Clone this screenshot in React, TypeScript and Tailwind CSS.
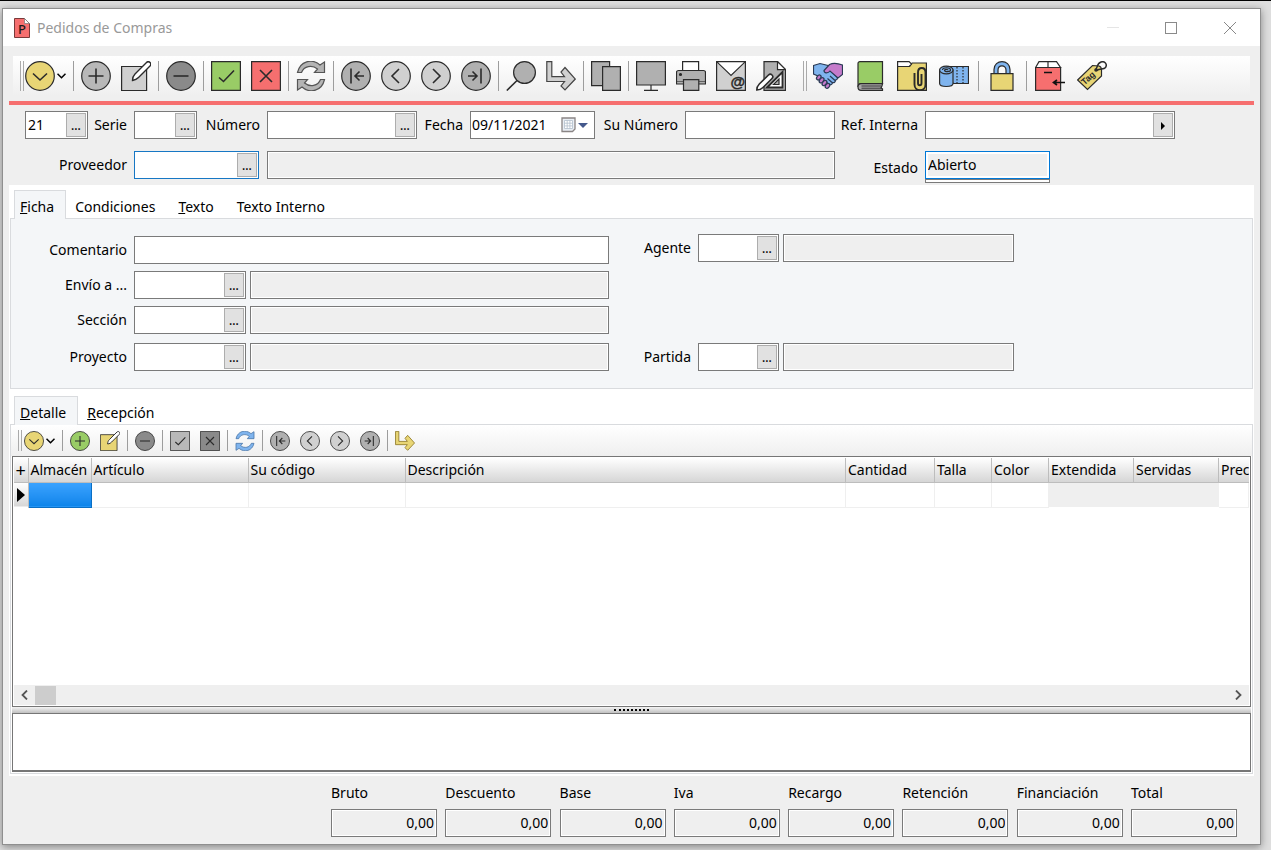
import type { ReactNode } from "react";

const INK = "#2b2b2b";

/* ---------- Icons, all drawn on a 30x30 board ---------- */

const Svg = ({ children }: { children: ReactNode }) => (
  <svg viewBox="0 0 30 30" className="size-full" fill="none" stroke={INK} strokeWidth="1.2" aria-hidden="true">
    {children}
  </svg>
);

const Disc = ({ fill, children }: { fill: string; children: ReactNode }) => (
  <Svg>
    <circle cx="15" cy="15" r="14.3" fill={fill} />
    {children}
  </Svg>
);

const MenuIcon = () => (
  <Disc fill="#e8d575"><path d="M8 12.5 15 19l7-6.5" strokeWidth="1.6" /></Disc>
);
const AddIcon = ({ fill = "#b8b8b8" }) => (
  <Disc fill={fill}><path d="M15 7.5v15M7.5 15h15" strokeWidth="1.6" /></Disc>
);
const RemoveIcon = () => (
  <Disc fill="#8a8a8a"><path d="M7.5 15h15" strokeWidth="1.6" /></Disc>
);
const FirstIcon = () => (
  <Disc fill="#b0b0b0"><path d="M10 7.5v15M23 15h-9M18.500 10.500 14 15l4.500 4.500" strokeWidth="1.6" /></Disc>
);
const PrevIcon = () => (
  <Disc fill="#d0d0d0"><path d="M18 8l-7 7 7 7" strokeWidth="1.6" /></Disc>
);
const NextIcon = () => (
  <Disc fill="#d0d0d0"><path d="M12 8l7 7-7 7" strokeWidth="1.6" /></Disc>
);
const LastIcon = () => (
  <Disc fill="#b0b0b0"><path d="M20 7.5v15M7 15h9M11.500 10.500 16 15l-4.500 4.500" strokeWidth="1.6" /></Disc>
);
const EditIcon = ({ fill = "#d0d0d0" }) => (
  <Svg>
    <path d="M.6 5.500h25v24H.6z" fill={fill} />
    <path d="M11.500 19.500c0-3 1-5 2.500-6.500L25.500 1.500c1-1 2.500-1 3.500 0s1 2.500 0 3.500L17.500 16.500c-1.500 1.500-3 2.500-6 3z" fill="#fff" strokeWidth="1.4" />
  </Svg>
);
const AcceptIcon = ({ fill = "#99cc66" }) => (
  <Svg>
    <path d="M.6.6h28.800v28.800H.6z" fill={fill} />
    <path d="M8 16.500l4.500 4L23 9.500" strokeWidth="1.6" />
  </Svg>
);
const CancelIcon = ({ fill = "#f66f6f" }) => (
  <Svg>
    <path d="M.6.6h28.800v28.800H.6z" fill={fill} />
    <path d="M9 9l12 12M21 9 9 21" strokeWidth="1.6" />
  </Svg>
);
const RefreshIcon = ({ fill = "#b4b4b4", stroke = "#555" }) => (
  <Svg>
    <g fill={fill} stroke={stroke}>
      <path d="M1.500 11.500C4 0 16-3 24 4l4.500-3v10.500h-10L21.500 8C16 3.500 8 5 5.500 11.500z" />
      <path d="M28.500 18.500C26 30 14 33 6 26l-4.500 3V18.500h10L8.500 22c5.500 4.500 13.500 3 16-3.500z" />
    </g>
  </Svg>
);
const SearchIcon = () => (
  <Svg>
    <circle cx="18.500" cy="11.500" r="10.900" fill="#b0b0b0" />
    <path d="M11 19.500.8 29.500" strokeWidth="1.6" />
  </Svg>
);
const ForwardIcon = ({ fill = "#d0d0d0", stroke = "#444" }) => (
  <Svg>
    <path d="M.8.600h5v15h12.700L15 11l4-4.500L29.300 18 19 29l-4-4 3.500-4.500H.8z" fill={fill} stroke={stroke} />
  </Svg>
);
const CopyIcon = () => (
  <Svg>
    <g fill="#b0b0b0">
      <path d="M.6.6h18v24H.6z" />
      <path d="M11.600 5.600h17.800v23.800H11.600z" />
    </g>
  </Svg>
);
const ScreenIcon = () => (
  <Svg>
    <path d="M.6.6h28.800v23.400H.6z" fill="#b0b0b0" />
    <path d="M15 24v5M8 29.300h14" />
  </Svg>
);
const PrintIcon = () => (
  <Svg>
    <path d="M6.600.6h16v10h-16z" fill="#fff" />
    <path d="M2.500 9.500h25c1 0 2 .8 2 2V23H.5V11.500c0-1.200 1-2 2-2z" fill="#b0b0b0" />
    <path d="M.5 20.500h29" strokeWidth=".6" />
    <path d="M7.500 18.600h15.300v10.800H7.500z" fill="#b0b0b0" />
    <circle cx="4.500" cy="13.500" r="1" fill={INK} />
  </Svg>
);
const MailIcon = () => (
  <Svg>
    <path d="M.6.6h28.800v28.800H.6z" fill="#d0d0d0" />
    <path d="M.6.6h28.800L15 14.500z" fill="#fff" />
    <text x="14.500" y="26" fontSize="15" fontWeight="700" fontFamily="Liberation Sans, sans-serif" fill={INK} stroke={INK} strokeWidth=".4">@</text>
  </Svg>
);
const DesignIcon = () => (
  <Svg>
    <path d="M8 .6h13.500l8 8v20.800H8z" fill="#b0b0b0" />
    <path d="M21.500.6v8h8z" fill="#fff" />
    <path d="M11 26.500 26.500 11v15.500z" fill="#fff" strokeWidth="1.8" />
    <path d="M17.500 23.500l5.500-5.500v5.500z" fill="#b0b0b0" />
    <path d="M.8 29c0-3 1-4.500 2.500-6L12.500 14c1-1 2.500-1 3.500 0s1 2.500 0 3.500l-9 9c-1.500 1.500-3.500 2.500-6.200 2.500z" fill="#fff" strokeWidth="1.6" />
  </Svg>
);
const DealIcon = () => (
  <Svg>
    <g stroke="#2a3a55">
      <path d="M.5 4.500 7 2.500l8 2L17 9l7 7c1 1.500 0 3-1.500 3 .2 2-1.500 3-3 2.500 0 2-2 2.800-3.500 1.800L5 15l-4.500-2z" fill="#7fb4ee" />
      <path d="M29.500 4v9.500L25 17l-8-7c-2 2.500-6 2.500-6-.5L16.500 3.500c4-2 9-1 13 .5z" fill="#c57bcb" />
      <path d="M17 15l5 4.500M14.500 17.500l4.500 4" />
      <g fill="#c57bcb">
        <ellipse cx="5.800" cy="16.500" rx="2.700" ry="1.900" transform="rotate(-50 5.800 16.500)" />
        <ellipse cx="8.600" cy="19.300" rx="2.900" ry="1.900" transform="rotate(-50 8.600 19.300)" />
        <ellipse cx="11.500" cy="22" rx="2.900" ry="1.900" transform="rotate(-50 11.500 22)" />
        <ellipse cx="14.500" cy="24.800" rx="2.700" ry="1.900" transform="rotate(-50 14.500 24.800)" />
      </g>
    </g>
  </Svg>
);
const BookIcon = () => (
  <Svg>
    <path d="M5 .6h22.500v22H6c-2 0-3 1.500-3 3.500V2.500C3 1.400 3.800.6 5 .6z" fill="#99cc66" />
    <path d="M27.500 22.600H6c-4 0-4 6.800 0 6.800h21.500v-1.500l-1.500-1 1-2z" fill="#a8a8a8" />
    <path d="M6.500 25h20M6.500 27.200h20" strokeWidth=".9" />
  </Svg>
);
const AttachIcon = () => (
  <Svg>
    <path d="M.6 5.500h12l2.500-3.500h14.300v27.400H.6z" fill="#e8d575" />
    <path d="M.6 5.500V.6h11.500L14.500 3l-2.200 2.500z" fill="#fff" />
    <path d="M24.500 13v9c0 3-3.500 3-3.500 0V11.500c0-6 7.500-6 7.500 0v12c0 7.500-11 7.500-11 0V12" strokeWidth="1.9" />
  </Svg>
);
const RollIcon = () => (
  <Svg>
    <path d="M8 5.500h21.500v17H14z" fill="#7fb4ee" />
    <path d="M18 6v16M24 6v16" strokeDasharray="1.500 1.500" />
    <path d="M.6 9v13.500c0 4 13.400 4 13.400 0V9z" fill="#7fb4ee" />
    <ellipse cx="7.300" cy="9" rx="6.700" ry="3.800" fill="#7fb4ee" />
    <path d="M3.500 9c0-3 8-3 8 0 0 2.200-6 2.200-6 .3 0-1.300 3.500-1.300 3.500 0" />
  </Svg>
);
const LockIcon = () => (
  <Svg>
    <path d="M7 13V8.500c0-10.500 16-10.500 16 0V13h-4V9c0-5.500-8-5.500-8 0v4z" fill="#7fb4ee" />
    <path d="M4 12.600h22v16.800H4z" fill="#e8d575" />
  </Svg>
);
const BoxIcon = () => (
  <Svg>
    <path d="M.6 6.500 4 .6h17.500l4 5.900z" fill="#fff" />
    <path d="M13 .6v6" />
    <path d="M.6 6.500h25v22.900H.6z" fill="#f66f6f" />
    <path d="M9 11.500h8M30 21.500H19M22 19l-3.500 2.500L22 24" stroke="#111" strokeWidth="1.700" />
  </Svg>
);
const TagIcon = () => (
  <Svg>
    <path d="M.6 19 15.500 4.500 22 5c1.800.5 2.500 2 2.500 4v6L10.500 28.500z" fill="#e8d575" />
    <path d="M18.500 8.500c2-1 1-6 5.500-7.500 4-1.300 6.500 2.500 4.500 5.500-2 2.500-5 .5-9 3" strokeWidth="1.5" />
    <circle cx="19" cy="9" r="1.800" fill={INK} stroke="none" />
    <text x="7.500" y="24.500" fontSize="9" fontWeight="700" fontFamily="Liberation Sans, sans-serif" fill={INK} stroke="none" transform="rotate(-42 7.500 24.500)">Tag</text>
  </Svg>
);

/* ---------- Toolbar parts ---------- */

const Tool = ({ label, small, wide, children }: { label: string; small?: boolean; wide?: boolean; children: ReactNode }) => (
  <button type="button" aria-label={label} title={label} className={`shrink-0 ${small ? "size-5" : "size-[30px]"} ${wide ? "mx-[6px]" : "mx-[5px]"}`}>
    {children}
  </button>
);

const Sep = ({ wide }: { wide?: boolean }) => (
  <span className={`flex shrink-0 justify-center self-stretch py-[5px] ${wide ? "w-[6px]" : "w-[5px]"}`}>
    <span className="w-px bg-[#9d9d9d]" />
  </span>
);

const Grip = () => (
  <span className="flex shrink-0 gap-[2px] self-stretch py-[5px]">
    <span className="w-px bg-[#aaa]" />
    <span className="w-px bg-[#aaa]" />
  </span>
);

const DropArrow = () => (
  <button type="button" aria-label="Más opciones" className="mr-1 w-[9px] shrink-0">
    <svg viewBox="0 0 9 6" className="w-full" fill="none" stroke="#000" strokeWidth="1.500"><path d="M.5.8l4 4 4-4" /></svg>
  </button>
);

/* ---------- Fields ---------- */

const Label = ({ htmlFor, className = "", children }: { htmlFor: string; className?: string; children: ReactNode }) => (
  <label htmlFor={htmlFor} className={`shrink-0 whitespace-nowrap pr-[7px] text-right ${className}`}>{children}</label>
);

interface LookupProps {
  id: string;
  width: string;
  value?: string;
  focused?: boolean;
  icon?: ReactNode;
}

const Lookup = ({ id, width, value = "", focused, icon }: LookupProps) => (
  <div className={`flex h-7 shrink-0 border bg-white p-px ${focused ? "border-[#1777c4]" : "border-[#7a7a7a]"} ${width}`}>
    <input id={id} defaultValue={value} className="w-full min-w-0 flex-1 pl-px outline-none" />
    <button type="button" aria-label="Buscar" className="flex w-5 shrink-0 items-center justify-center border border-[#adadad] bg-[#e1e1e1] pt-px text-xs font-medium leading-none">
      {icon || "..."}
    </button>
  </div>
);

const ReadOnly = ({ label, className = "" }: { label: string; className?: string }) => (
  <input readOnly aria-label={label} className={`h-7 min-w-0 border border-[#7a7a7a] bg-[#efefef] shadow-[inset_0_0_0_1px_#fff] outline-none ${className}`} />
);

const Tab = ({ active, children }: { active?: boolean; children: ReactNode }) => (
  <button
    type="button"
    role="tab"
    aria-selected={!!active}
    className={active
      ? "relative -mb-px h-[29px] border border-b-0 border-[#d9dbde] bg-[#f4f6f8] pl-[5px] pr-[11px] pt-1"
      : "h-7 pl-[9px] pr-[14px] pt-[6px]"}
  >
    {children}
  </button>
);

const columns = [
  { name: "Almacén", width: "w-[63px]" },
  { name: "Artículo", width: "w-[157px]" },
  { name: "Su código", width: "w-[157px]" },
  { name: "Descripción", width: "" },
  { name: "Cantidad", width: "w-[89px]" },
  { name: "Talla", width: "w-[57px]" },
  { name: "Color", width: "w-[57px]" },
  { name: "Extendida", width: "w-[85px]", locked: true },
  { name: "Servidas", width: "w-[85px]", locked: true },
  { name: "Prec", width: "w-[30px]" },
];

const totals = ["Bruto", "Descuento", "Base", "Iva", "Recargo", "Retención", "Financiación", "Total"];

const TitleBar = () => (
  <header className="flex h-[37px] shrink-0 items-center bg-white pl-[11px]">
    <svg viewBox="0 0 16 20" className="h-5 w-4" aria-hidden="true">
      <path d="M.5.5h10l5 5v14H.5z" fill="#f66f6f" stroke="#7a3a3a" />
      <path d="M10.500.5v5h5z" fill="#fff" stroke="#777" strokeWidth=".7" />
      <text x="4" y="16" fontSize="13" fontFamily="Noto Sans, sans-serif" fontWeight="500" fill="#1a1a1a">P</text>
    </svg>
    <h1 className="flex-1 pl-[7px] text-sm text-[#999]">Pedidos de Compras</h1>
    <button type="button" aria-label="Minimizar" className="flex h-full w-[58px] items-center justify-center"><span className="h-px w-3 bg-[#e5e5e5]" /></button>
    <button type="button" aria-label="Maximizar" className="flex h-full w-[58px] items-center justify-center"><span className="size-3 border border-[#8a8a8a]" /></button>
    <button type="button" aria-label="Cerrar" className="flex h-full w-[60px] items-center justify-center">
      <svg viewBox="0 0 12 12" className="size-3" stroke="#888"><path d="M0 0l12 12M12 0 0 12" /></svg>
    </button>
  </header>
);

const MainToolbar = () => (
  <div role="toolbar" aria-label="Principal" className="mx-[10px] mb-px mt-[10px] flex h-10 shrink-0 items-center bg-linear-to-b from-white to-[#efefef] pl-[7px]">
    <Grip />
    <span className="-ml-1 flex items-center">
      <Tool label="Menú"><MenuIcon /></Tool>
      <span className="-ml-[3px] mr-px flex"><DropArrow /></span>
    </span>
    <Sep />
    <Tool label="Nuevo"><AddIcon /></Tool>
    <Tool label="Editar"><EditIcon /></Tool>
    <Sep />
    <Tool label="Borrar"><RemoveIcon /></Tool>
    <Sep />
    <Tool label="Aceptar"><AcceptIcon /></Tool>
    <Tool label="Cancelar"><CancelIcon /></Tool>
    <Sep />
    <Tool label="Refrescar"><RefreshIcon /></Tool>
    <Sep />
    <Tool label="Primero"><FirstIcon /></Tool>
    <Tool label="Anterior"><PrevIcon /></Tool>
    <Tool label="Siguiente"><NextIcon /></Tool>
    <Tool label="Último"><LastIcon /></Tool>
    <Sep />
    <Tool label="Buscar"><SearchIcon /></Tool>
    <Tool label="Ir a"><ForwardIcon /></Tool>
    <Sep />
    <Tool label="Duplicar"><CopyIcon /></Tool>
    <Sep />
    <Tool label="Pantalla"><ScreenIcon /></Tool>
    <Tool label="Imprimir"><PrintIcon /></Tool>
    <Tool label="Enviar"><MailIcon /></Tool>
    <Tool label="Diseñar"><DesignIcon /></Tool>
    <span className="ml-3 flex self-stretch"><Grip /></span>
    <Tool wide label="Acuerdos"><DealIcon /></Tool>
    <Tool wide label="Libro"><BookIcon /></Tool>
    <Tool wide label="Adjuntos"><AttachIcon /></Tool>
    <Tool wide label="Trazabilidad"><RollIcon /></Tool>
    <Sep wide />
    <Tool wide label="Bloquear"><LockIcon /></Tool>
    <Sep wide />
    <Tool wide label="Recibir"><BoxIcon /></Tool>
    <Tool wide label="Etiquetas"><TagIcon /></Tool>
  </div>
);

const OrderHeader = () => (
  <section className="flex flex-col gap-3 px-4 pb-[2px] pt-[6px]">
    <div className="flex items-center">
      <Lookup id="ejercicio" width="w-[63px]" value="21" />
      <Label htmlFor="serie" className="w-[46px]">Serie</Label>
      <Lookup id="serie" width="w-[63px]" />
      <Label htmlFor="numero" className="w-[70px]">Número</Label>
      <Lookup id="numero" width="w-[150px]" />
      <Label htmlFor="fecha" className="w-[53px]">Fecha</Label>
      <div className="flex h-7 w-[125px] shrink-0 items-center border border-[#7a7a7a] bg-white">
        <input id="fecha" defaultValue="09/11/2021" className="w-full min-w-0 flex-1 pl-px outline-none" />
        <button type="button" aria-label="Calendario" className="mr-[6px] flex w-[27px] shrink-0 items-center gap-[2px]">
          <svg viewBox="0 0 15 16" className="h-4 w-[15px]">
            <path d="M1 1h13v11l-2.500 2.500H1z" fill="#e9eef4" stroke="#8a8585" strokeWidth="1.300" />
            <path d="M3.500 3.500h8v8h-8zM6.200 3.500v8M8.900 3.500v8M3.500 6.200h8M3.500 8.900h8" fill="#fff" stroke="#b3bfcd" strokeWidth=".8" />
          </svg>
          <svg viewBox="0 0 10 5" className="h-[5px] w-[10px]"><path d="M0 0h10L5 5z" fill="#44598c" /></svg>
        </button>
      </div>
      <Label htmlFor="su-numero" className="w-[90px]">Su Número</Label>
      <input id="su-numero" className="h-7 w-[150px] shrink-0 border border-[#7a7a7a] bg-white outline-none" />
      <Label htmlFor="ref-interna" className="w-[90px]">Ref. Interna</Label>
      <Lookup
        id="ref-interna"
        width="w-[250px]"
        icon={<svg viewBox="0 0 4 8" className="h-2 w-1"><path d="M0 0l4 4-4 4z" /></svg>}
      />
    </div>
    <div className="flex items-start">
      <Label htmlFor="proveedor" className="w-[109px] leading-7">Proveedor</Label>
      <Lookup id="proveedor" width="w-[125px]" focused />
      <ReadOnly label="Nombre del proveedor" className="ml-2 w-[568px] shrink-0" />
      <Label htmlFor="estado" className="w-[90px] pt-[3px] leading-7">Estado</Label>
      <div className="w-[125px] shrink-0">
        <input id="estado" readOnly value="Abierto" className="block h-7 w-full border border-[#0078d7] bg-[#efefef] pb-[2px] pl-[2px] shadow-[inset_0_0_0_2px_#fff] outline-none" />
        <div className="h-1 border border-[#7a7a7a] bg-white" />
      </div>
    </div>
  </section>
);

const FichaPanel = () => (
  <div role="tabpanel" className="mx-px flex h-[171px] shrink-0 gap-[34px] border border-[#d9dbde] bg-[#f4f6f8] pl-[10px]">
    <div className="flex w-[588px] shrink-0 flex-col gap-[7px] pt-[17px]">
      <div className="flex items-center">
        <Label htmlFor="comentario" className="w-[113px]">Comentario</Label>
        <input id="comentario" className="h-7 min-w-0 flex-1 border border-[#7a7a7a] bg-white outline-none" />
      </div>
      <div className="flex items-center">
        <Label htmlFor="envio" className="w-[113px]">Envío a ...</Label>
        <Lookup id="envio" width="w-[112px]" />
        <ReadOnly label="Dirección de envío" className="ml-1 flex-1" />
      </div>
      <div className="flex items-center">
        <Label htmlFor="seccion" className="w-[113px]">Sección</Label>
        <Lookup id="seccion" width="w-[112px]" />
        <ReadOnly label="Nombre de la sección" className="ml-1 flex-1" />
      </div>
      <div className="flex items-center pt-[2px]">
        <Label htmlFor="proyecto" className="w-[113px]">Proyecto</Label>
        <Lookup id="proyecto" width="w-[112px]" />
        <ReadOnly label="Nombre del proyecto" className="ml-1 flex-1" />
      </div>
    </div>
    <div className="flex flex-col gap-[81px] pt-[15px]">
      <div className="flex items-center">
        <Label htmlFor="agente" className="w-[55px]">Agente</Label>
        <Lookup id="agente" width="w-[81px]" />
        <ReadOnly label="Nombre del agente" className="ml-1 w-[231px]" />
      </div>
      <div className="flex items-center">
        <Label htmlFor="partida" className="w-[55px]">Partida</Label>
        <Lookup id="partida" width="w-[81px]" />
        <ReadOnly label="Nombre de la partida" className="ml-1 w-[231px]" />
      </div>
    </div>
  </div>
);

const DetailToolbar = () => (
  <div role="toolbar" aria-label="Detalle" className="flex h-[31px] shrink-0 items-center bg-linear-to-b from-white to-[#efefef] pl-[7px]">
    <Grip />
    <span className="-ml-[3px] flex items-center">
      <Tool small label="Menú de líneas"><MenuIcon /></Tool>
      <span className="-ml-[3px] mr-px flex"><DropArrow /></span>
    </span>
    <Sep />
    <Tool small label="Nueva línea"><AddIcon fill="#99cc66" /></Tool>
    <Tool small label="Editar línea"><EditIcon fill="#e8d575" /></Tool>
    <Sep />
    <Tool small label="Borrar línea"><RemoveIcon /></Tool>
    <Sep />
    <Tool small label="Aceptar línea"><AcceptIcon fill="#b8b8b8" /></Tool>
    <Tool small label="Cancelar línea"><CancelIcon fill="#8a8a8a" /></Tool>
    <Sep />
    <Tool small label="Refrescar líneas"><RefreshIcon fill="#7fb4ee" stroke="#4a76a8" /></Tool>
    <Sep />
    <Tool small label="Primera línea"><FirstIcon /></Tool>
    <Tool small label="Línea anterior"><PrevIcon /></Tool>
    <Tool small label="Línea siguiente"><NextIcon /></Tool>
    <Tool small label="Última línea"><LastIcon /></Tool>
    <Sep />
    <Tool small label="Ir a la línea"><ForwardIcon fill="#e8d575" stroke="#8a7420" /></Tool>
  </div>
);

const LinesGrid = () => (
  <div className="mx-px flex min-h-[120px] flex-1 flex-col border border-[#767676] bg-white p-px">
    <table className="w-full table-fixed border-collapse overflow-hidden">
      <thead>
        <tr className="h-6 bg-linear-to-b from-white to-[#d6d6d6]">
          <th className="w-[14px] border-b border-r border-[#bdbdbd] p-0 text-center text-lg font-normal leading-none">+</th>
          {columns.map((col) => (
            <th key={col.name} className={`overflow-hidden whitespace-nowrap border-b border-r border-[#bdbdbd] p-0 pl-[2px] text-left font-normal last:border-r-0 ${col.width}`}>
              {col.name}
            </th>
          ))}
        </tr>
      </thead>
      <tbody>
        <tr className="h-[25px]">
          <td className="border-r border-[#bdbdbd] bg-linear-to-b from-white to-[#d6d6d6] p-0 pl-[3px]">
            <svg viewBox="0 0 8 14" className="h-[14px] w-2"><path d="M0 0l8 7-8 7z" /></svg>
          </td>
          {columns.map((col, i) => (
            <td
              key={col.name}
              className={i === 0
                ? "border border-[#0a6fc4] bg-linear-to-b from-[#3aa3ff] to-[#0a84ea] p-0"
                : col.locked
                  ? "bg-[#efefef] p-0"
                  : "border-b border-r border-[#efefef] p-0"}
            />
          ))}
        </tr>
      </tbody>
    </table>
    <div className="flex-1" />
    <div className="flex h-5 shrink-0 items-center bg-[#efefef] px-[7px]">
      <button type="button" aria-label="Desplazar a la izquierda">
        <svg viewBox="0 0 7 10" className="h-[10px] w-[7px]" fill="none" stroke="#555" strokeWidth="1.800"><path d="M6 .5 1.500 5 6 9.500" /></svg>
      </button>
      <div className="ml-[7px] h-[19px] w-[21px] bg-[#cdcdcd]" />
      <div className="flex-1" />
      <button type="button" aria-label="Desplazar a la derecha">
        <svg viewBox="0 0 7 10" className="h-[10px] w-[7px]" fill="none" stroke="#555" strokeWidth="1.800"><path d="M1 .5 5.500 5 1 9.500" /></svg>
      </button>
    </div>
  </div>
);

const App = () => (
  <div className="flex min-h-screen flex-col border-t border-black bg-[#dedede] pb-[5px] pl-[2px] pr-[10px] pt-[7px] font-['Noto_Sans','Open_Sans',sans-serif] text-sm text-black">
    <div className="flex flex-1 flex-col border border-[#8f8f8f] bg-[#efefef] shadow-[0_2px_8px_rgba(0,0,0,0.4)]">
      <TitleBar />
      <MainToolbar />
      <main className="mx-[6px] flex flex-1 flex-col">
        <div className="mt-1 h-1 shrink-0 bg-[#f66f6f]" />
        <OrderHeader />

        {/* Header tabs */}
        <div className="flex flex-1 flex-col bg-white pb-[2px]">
          <div role="tablist" className="flex h-[33px] shrink-0 items-end pl-[5px]">
            <Tab active><u>F</u>icha</Tab>
            <Tab>Condiciones</Tab>
            <Tab><u>T</u>exto</Tab>
            <Tab>Texto Interno</Tab>
          </div>
          <FichaPanel />

          {/* Line tabs */}
          <div role="tablist" className="flex h-[35px] shrink-0 items-end pl-[5px]">
            <Tab active><u>D</u>etalle</Tab>
            <Tab><u>R</u>ecepción</Tab>
          </div>
          <div role="tabpanel" className="mx-px flex flex-1 flex-col border border-[#d9dbde] bg-white">
            <DetailToolbar />
            <LinesGrid />
            <div className="mx-px flex h-[6px] shrink-0 items-center justify-center bg-linear-to-b from-[#f4f4f4] to-[#c0c0c0]">
              <span className="w-[35px] border-t-2 border-dotted border-black" />
            </div>
            <textarea aria-label="Observaciones" className="mx-px mb-px block h-[59px] shrink-0 resize-none border border-b-2 border-[#767676] bg-white outline-none" />
          </div>
        </div>
      </main>

      {/* Totals */}
      <footer className="flex shrink-0 justify-end pb-[7px] pr-[23px] pt-[7px]">
        <div className="flex w-[906px] justify-between">
          {totals.map((name) => (
            <div key={name} className="flex w-[106px] flex-col gap-[6px]">
              <label htmlFor={name} className="leading-5">{name}</label>
              <input id={name} readOnly value="0,00" className="h-7 w-full border border-[#7a7a7a] bg-[#efefef] pb-[2px] pr-[2px] text-right shadow-[inset_0_0_0_1px_#fff] outline-none" />
            </div>
          ))}
        </div>
      </footer>
    </div>
  </div>
);

export default App;
